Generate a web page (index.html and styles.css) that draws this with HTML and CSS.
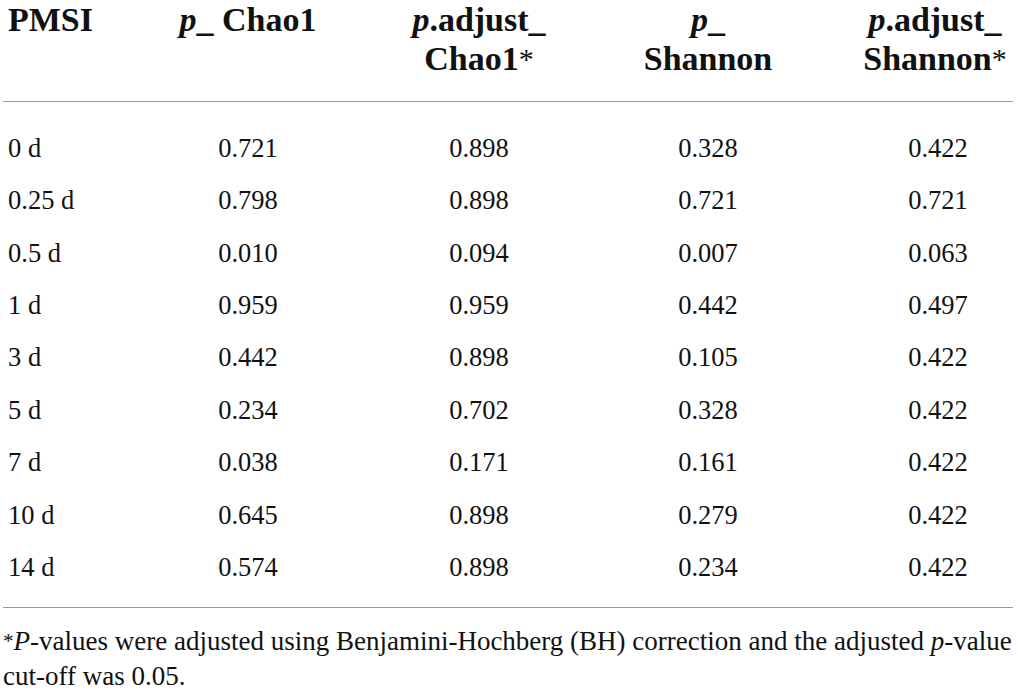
FILE: index.html
```html
<!DOCTYPE html>
<html>
<head>
<meta charset="utf-8">
<link rel="stylesheet" href="styles.css">
</head>
<body>
<div class="page">
  <div class="head grid">
    <div class="th left">PMSI</div>
    <div class="th"><i>p</i>_ Chao1</div>
    <div class="th"><i>p</i>.adjust_<br>Chao1<span class="ast">*</span></div>
    <div class="th"><i>p</i>_<br>Shannon</div>
    <div class="th last"><i>p</i>.adjust_<br>Shannon<span class="ast">*</span></div>
  </div>
  <div class="body grid">
    <div class="td left">0 d</div><div class="td">0.721</div><div class="td">0.898</div><div class="td">0.328</div><div class="td last">0.422</div>
    <div class="td left">0.25 d</div><div class="td">0.798</div><div class="td">0.898</div><div class="td">0.721</div><div class="td last">0.721</div>
    <div class="td left">0.5 d</div><div class="td">0.010</div><div class="td">0.094</div><div class="td">0.007</div><div class="td last">0.063</div>
    <div class="td left">1 d</div><div class="td">0.959</div><div class="td">0.959</div><div class="td">0.442</div><div class="td last">0.497</div>
    <div class="td left">3 d</div><div class="td">0.442</div><div class="td">0.898</div><div class="td">0.105</div><div class="td last">0.422</div>
    <div class="td left">5 d</div><div class="td">0.234</div><div class="td">0.702</div><div class="td">0.328</div><div class="td last">0.422</div>
    <div class="td left">7 d</div><div class="td">0.038</div><div class="td">0.171</div><div class="td">0.161</div><div class="td last">0.422</div>
    <div class="td left">10 d</div><div class="td">0.645</div><div class="td">0.898</div><div class="td">0.279</div><div class="td last">0.422</div>
    <div class="td left">14 d</div><div class="td">0.574</div><div class="td">0.898</div><div class="td">0.234</div><div class="td last">0.422</div>
  </div>
  <p class="note"><span class="ast-note">*</span><i>P</i>-values were adjusted using Benjamini-Hochberg (BH) correction and the adjusted <span class="nw"><i>p</i>-value</span> cut-off was 0.05.</p>
</div>
</body>
</html>
```

FILE: styles.css
```css
html, body {
  margin: 0;
  padding: 0;
  background: #ffffff;
}
body {
  font-family: "Liberation Serif", "DejaVu Serif", serif;
  color: #111111;
}
.page {
  width: 1010px;
  margin-left: 3px;
}
.grid {
  display: grid;
  grid-template-columns: 130px 230px 232px 226px 192px;
}
.head {
  padding-bottom: 23px;
  border-bottom: 1px solid #999999;
}
.th {
  font-weight: bold;
  font-size: 34px;
  line-height: 39px;
  text-align: center;
  white-space: nowrap;
}
.th.left, .td.left {
  text-align: left;
  padding-left: 5px;
}
.th.last, .td.last {
  padding-left: 42px;
}
.th.last {
  padding-left: 36px;
}
.ast {
  font-weight: normal;
  font-size: 30px;
  vertical-align: 1px;
}
.body {
  grid-auto-rows: 52.4px;
  padding-top: 19.8px;
  padding-bottom: 14px;
  border-bottom: 1px solid #999999;
}
.td {
  font-size: 26.5px;
  line-height: 52.4px;
  text-align: center;
}
.note {
  margin: 16px 0 0 0;
  font-size: 27px;
  line-height: 35px;
}
.nw {
  white-space: nowrap;
}
.ast-note {
  font-size: 21px;
  vertical-align: 2px;
}
```
